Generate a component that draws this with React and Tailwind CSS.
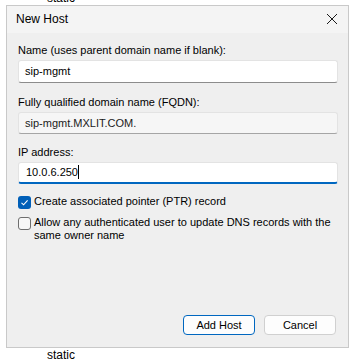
export default function App() {
  return (
    <div
      className="w-[355px] h-[362px] bg-white overflow-hidden flex flex-col text-[11px] text-black"
      style={{ fontFamily: '"Liberation Sans", Arial, sans-serif' }}
    >
      {/* window behind the dialog */}
      <div className="h-[5px] overflow-hidden pl-[47px]">
        <div className="text-[12px] leading-[14px] -mt-[9px]">static</div>
      </div>

      <div className="ml-[6px] w-[343px] h-[350px] border border-[#c9c9c9] bg-[#efefef] flex flex-col">
        <div className="h-[27px] bg-[#f4f4f4] flex items-center justify-between pl-[9px] pr-[9px]">
          <span className="text-[12px]">New Host</span>
          <svg width="12" height="12" viewBox="0 0 12 12" className="mr-[1px]">
            <path d="M1 1 L11 11 M11 1 L1 11" stroke="#1a1a1a" strokeWidth="1" fill="none" />
          </svg>
        </div>

        <div className="flex-1 flex flex-col pl-[11px] pr-[10px] pt-[9px] pb-[12px]">
          <label className="leading-[16px] mb-[2px]">Name (uses parent domain name if blank):</label>
          <div className="h-[23px] bg-white border border-[#e3e3e3] border-b-[#8c8c8c] rounded-[3px] flex items-center pl-[6px]">
            sip-mgmt
          </div>

          <label className="leading-[16px] mt-[11px] mb-[2px]">Fully qualified domain name (FQDN):</label>
          <div className="h-[22px] bg-[#f6f6f6] border border-[#e3e3e3] border-b-[#a5a5a5] rounded-[3px] flex items-center pl-[6px] text-[#1b1b1b]">
            sip-mgmt.MXLIT.COM.
          </div>

          <label className="leading-[16px] mt-[10px] mb-[2px]">IP address:</label>
          <div className="h-[22px] bg-white border border-[#e3e3e3] border-b-2 border-b-[#0067c0] rounded-[3px] flex items-center pl-[7px]">
            <span>10.0.6.250</span>
            <span className="w-px h-[14px] bg-black" />
          </div>

          <div className="flex items-start gap-[3px] mt-[11px]">
            <span className="w-[13px] h-[13px] rounded-[3px] bg-[#005fb8] flex items-center justify-center mt-[1px] shrink-0">
              <svg width="9" height="9" viewBox="0 0 9 9">
                <path d="M1.5 4.8 L3.6 6.8 L7.6 2.4" stroke="white" strokeWidth="1.1" fill="none" />
              </svg>
            </span>
            <span className="leading-[13px]">Create associated pointer (PTR) record</span>
          </div>

          <div className="flex items-start gap-[3px] mt-[7px]">
            <span className="w-[13px] h-[13px] rounded-[3px] border border-[#6e6e6e] bg-[#f7f7f7] mt-[1px] shrink-0" />
            <span className="leading-[13px]">Allow any authenticated user to update DNS records with the same owner name</span>
          </div>

          <div className="flex-1" />

          <div className="flex justify-end gap-[9px] pr-[2px]">
            <button className="w-[72px] h-[20px] bg-[#fdfdfd] border border-[#0067c0] rounded-[4px] text-[11px] flex items-center justify-center">
              Add Host
            </button>
            <button className="w-[72px] h-[20px] bg-[#fdfdfd] border border-[#d0d0d0] rounded-[4px] text-[11px] flex items-center justify-center">
              Cancel
            </button>
          </div>
        </div>
      </div>

      <div className="pl-[47px] text-[12px] leading-[14px]">static</div>
    </div>
  );
}
